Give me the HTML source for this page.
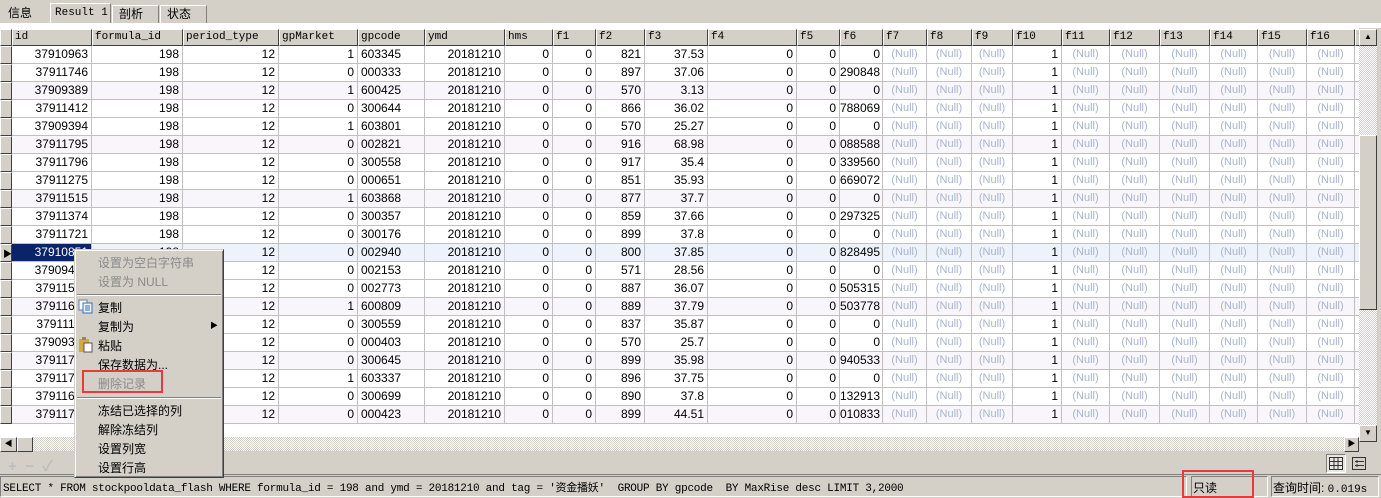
<!DOCTYPE html>
<html><head><meta charset="utf-8"><style>
*{margin:0;padding:0;box-sizing:border-box}
body{width:1381px;height:498px;background:#d4d0c8;position:relative;overflow:hidden;font-family:"Liberation Sans","Noto Sans CJK SC",sans-serif;font-size:12px;color:#000}
.a{position:absolute;white-space:nowrap}
.tab{position:absolute;top:5px;height:18px;border:1px solid #fff;border-right-color:#808080;border-bottom:none;padding:2px 6px;font-size:12px;line-height:13px;white-space:nowrap}
#grid{position:absolute;left:0;top:28px;width:1359px;height:409px;background:#fff;overflow:hidden}
.c{position:absolute;height:18px;border-right:1px solid #c0c0c0;border-bottom:1px solid #c0c0c0;line-height:17px;padding:0 3px;overflow:hidden;text-align:right;font-size:12px;white-space:nowrap}
.h{position:absolute;top:1px;height:17px;background:#d4d0c8;border:1px solid #fff;border-right-color:#404040;border-bottom-color:#404040;font-family:"Liberation Mono",monospace;font-size:11px;line-height:14px;padding-left:2px;overflow:hidden}
.rh{position:absolute;left:0;width:12px;height:18px;background:#d4d0c8;border:1px solid #fff;border-right-color:#404040;border-bottom-color:#404040}
.n{color:#a8b4cc}
.mi{position:absolute;left:98px;font-size:12px}
.dis{color:#8a8a8a}
</style></head><body>
<div class="tab" style="left:2px;width:44px;border:none">信息</div>
<div class="tab" style="left:50px;width:61px;background:#d4d0c8;top:3px;height:21px;padding:3px 4px;font-family:'Liberation Mono',monospace;font-size:11px">Result 1</div>
<div class="tab" style="left:112px;width:47px">剖析</div>
<div class="tab" style="left:160px;width:47px">状态</div>
<div class="a" style="left:0;top:23px;width:1381px;height:5px;background:#fff"></div>
<div id="grid"></div>
<div class="a" style="left:1359px;top:29px;width:18px;height:408px;background:repeating-conic-gradient(#d4d0c8 0 25%,#fff 0 50%) 0 0/2px 2px"></div>
<div class="a" style="left:1359px;top:29px;width:18px;height:17px;background:#d4d0c8;border:1px solid #fff;border-right-color:#404040;border-bottom-color:#404040;font-size:8px;text-align:center;line-height:14px">▲</div>
<div class="a" style="left:1359px;top:135px;width:18px;height:175px;background:#d4d0c8;border:1px solid #fff;border-right-color:#404040;border-bottom-color:#404040"></div>
<div class="a" style="left:1359px;top:425px;width:18px;height:17px;background:#d4d0c8;border:1px solid #fff;border-right-color:#404040;border-bottom-color:#404040;font-size:8px;text-align:center;line-height:14px">▼</div>
<div class="a" style="left:0;top:437px;width:1359px;height:14px;background:repeating-conic-gradient(#d4d0c8 0 25%,#fff 0 50%) 0 0/2px 2px"></div>
<div class="a" style="left:0;top:437px;width:17px;height:15px;background:#d4d0c8;border:1px solid #fff;border-right-color:#404040;border-bottom-color:#404040;font-size:8px;line-height:12px;text-align:center">◀</div>
<div class="a" style="left:17px;top:437px;width:16px;height:15px;background:#d4d0c8;border:1px solid #fff;border-right-color:#404040;border-bottom-color:#404040"></div>
<div class="a" style="left:1344px;top:437px;width:15px;height:15px;background:#d4d0c8;border:1px solid #fff;border-right-color:#404040;border-bottom-color:#404040;font-size:8px;line-height:12px;text-align:center">▶</div>
<div class="a" style="left:8px;top:455px;color:#bdbdbd;font-size:15px;font-weight:bold">+ &nbsp;− &nbsp;✓</div>
<div class="a" style="left:1326px;top:454px;width:20px;height:19px;border:1px solid #808080;border-right-color:#fff;border-bottom-color:#fff;background:#e8e6e0"></div>
<svg class="a" style="left:1329px;top:457px" width="14" height="13"><g fill="none" stroke="#333"><rect x=".5" y=".5" width="13" height="12"/><path d="M5 1v12M9 1v12M1 4.5h13M1 8.5h13"/></g></svg>
<svg class="a" style="left:1352px;top:457px" width="14" height="13"><g fill="none" stroke="#333"><rect x=".5" y=".5" width="13" height="12"/><path d="M3 4.5h9M3 8.5h9M5 3v3M5 7v3"/></g></svg>
<div class="a" style="left:0;top:474px;width:1381px;height:1px;background:#808080"></div>
<div class="a" style="left:0;top:476px;width:1187px;height:21px;border:1px solid #808080;border-right-color:#fff;border-bottom-color:#fff"></div>
<div class="a" style="left:3px;top:479px;font-family:'Liberation Mono',monospace;font-size:11px;letter-spacing:-.25px">SELECT * FROM stockpooldata_flash WHERE formula_id = 198 and ymd = 20181210 and tag = '资金播妖'&nbsp; GROUP BY gpcode&nbsp; BY MaxRise desc LIMIT 3,2000</div>
<div class="a" style="left:1191px;top:476px;width:77px;height:21px;border:1px solid #808080;border-right-color:#fff;border-bottom-color:#fff"></div>
<div class="a" style="left:1193px;top:479px">只读</div>
<div class="a" style="left:1271px;top:476px;width:108px;height:21px;border:1px solid #808080;border-right-color:#fff;border-bottom-color:#fff"></div>
<div class="a" style="left:1273px;top:479px">查询时间: <span style="font-family:'Liberation Mono',monospace;font-size:11px">0.019s</span></div>
<div class="a" style="left:1182px;top:470px;width:72px;height:28px;border:2px solid #e83a3a"></div>
<div class="a" style="left:74px;top:249px;width:150px;height:229px;background:#d4d0c8;border:1px solid #d4d0c8;border-right-color:#404040;border-bottom-color:#404040;box-shadow:inset 1px 1px 0 #fff,inset -1px -1px 0 #808080"></div>
<div class="mi dis" style="top:254px">设置为空白字符串</div>
<div class="mi dis" style="top:273px">设置为 NULL</div>
<div class="a" style="left:77px;top:294px;width:144px;height:2px;border-top:1px solid #808080;border-bottom:1px solid #fff"></div>
<svg class="a" style="left:78px;top:299px" width="15" height="15"><rect x="1" y="1" width="8" height="10" fill="#fff" stroke="#5a7fb0"/><rect x="5" y="4" width="9" height="10" fill="#eaf2fb" stroke="#3a6fb0"/><path d="M7 7h5M7 9h5M7 11h5" stroke="#3a6fb0"/></svg>
<div class="mi" style="top:299px">复制</div>
<div class="mi" style="top:318px">复制为</div>
<div class="a" style="left:210px;top:320px;font-size:8px">▶</div>
<svg class="a" style="left:78px;top:337px" width="15" height="16"><rect x="1" y="2" width="10" height="13" fill="#d9a640"/><rect x="4" y="0" width="4" height="3" fill="#888"/><rect x="6" y="6" width="8" height="9" fill="#fff" stroke="#555"/></svg>
<div class="mi" style="top:337px">粘贴</div>
<div class="mi" style="top:356px">保存数据为...</div>
<div class="mi dis" style="top:375px">删除记录</div>
<div class="a" style="left:82px;top:370px;width:81px;height:23px;border:2px solid #e83a3a"></div>
<div class="a" style="left:77px;top:397px;width:144px;height:2px;border-top:1px solid #808080;border-bottom:1px solid #fff"></div>
<div class="mi" style="top:402px">冻结已选择的列</div>
<div class="mi" style="top:421px">解除冻结列</div>
<div class="mi" style="top:440px">设置列宽</div>
<div class="mi" style="top:459px">设置行高</div>
<script>
var xs=[12,92,183,279,358,425,505,553,596,645,708,797,840,883,927,972,1013,1062,1110,1160,1210,1258,1307,1355,1400];
var hd=["id","formula_id","period_type","gpMarket","gpcode","ymd","hms","f1","f2","f3","f4","f5","f6","f7","f8","f9","f10","f11","f12","f13","f14","f15","f16","f17"];
var rows=[
["37910963",1,"603345",821,"37.53","0"],["37911746",0,"000333",897,"37.06","0.3290848"],["37909389",1,"600425",570,"3.13","0"],
["37911412",0,"300644",866,"36.02","0.788069"],["37909394",1,"603801",570,"25.27","0"],["37911795",0,"002821",916,"68.98","0.3088588"],
["37911796",0,"300558",917,"35.4","0.1339560"],["37911275",0,"000651",851,"35.93","0.669072"],["37911515",1,"603868",877,"37.7","0"],
["37911374",0,"300357",859,"37.66","-0.297325"],["37911721",0,"300176",899,"37.8","0"],["37910851",0,"002940",800,"37.85","0.828495"],
["37909412",0,"002153",571,"28.56","0"],["37911541",0,"002773",887,"36.07","0.1505315"],["37911622",1,"600809",889,"37.79","0.1503778"],
["37911128",0,"300559",837,"35.87","0"],["37909399",0,"000403",570,"25.7","0"],["37911719",0,"300645",899,"35.98","0.2940533"],
["37911763",1,"603337",896,"37.75","0"],["37911651",0,"300699",890,"37.8","-0.132913"],["37911777",0,"000423",899,"44.51","0.010833"]];
var g=document.getElementById('grid'),h='';
h+='<div class="rh" style="top:1px;height:17px"></div>';
for(var i=0;i<hd.length;i++)h+='<div class="h" style="left:'+xs[i]+'px;width:'+(xs[i+1]-xs[i])+'px">'+hd[i]+'</div>';
for(var r=0;r<rows.length;r++){
 var y=18+r*18,d=rows[r];
 var bg=(r==11)?'#eef3fb':(r%3==2?'#f8f6fb':'#fff');
 h+='<div class="rh" style="top:'+y+'px">'+(r==11?'<span style="position:absolute;left:2px;top:2px;font-size:9px">▶</span>':'')+'</div>';
 var v=[d[0],198,12,d[1],d[2],20181210,0,0,d[3],d[4],0,0,d[5],'N','N','N',1,'N','N','N','N','N','N',''];
 for(var i=0;i<24;i++){
  var s=v[i],st='left:'+xs[i]+'px;top:'+y+'px;width:'+(xs[i+1]-xs[i])+'px;background:'+(i==0&&r==11?'#0a246a;color:#fff':bg)+';';
  var cls='c',txt=s;
  if(s==='N'){cls+=' n';txt='(Null)';st+='text-align:center;padding:0;font-size:11px;';}
  if(i==4)st+='text-align:left;';
  if(i==12){st+='direction:rtl;text-align:right;padding:0 2px 0 0;';txt='<span style="direction:ltr;unicode-bidi:bidi-override">'+s+'</span>';}
  h+='<div class="'+cls+'" style="'+st+'">'+txt+'</div>';
 }
}
g.innerHTML=h;
</script>
</body></html>
